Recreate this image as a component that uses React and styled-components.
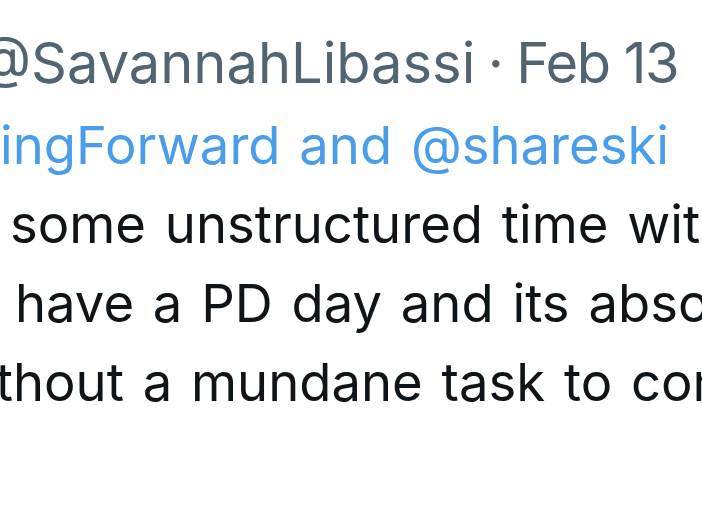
import React from "react";
import styled, { createGlobalStyle } from "styled-components";

const Global = createGlobalStyle`
  html, body { margin: 0; padding: 0; background: #fff; }
  body { font-family: Inter, "Noto Sans", sans-serif; }
`;

const Frame = styled.div`
  width: 702px;
  height: 526px;
  overflow: hidden;
  padding-top: 23px;
  box-sizing: border-box;
`;

const Header = styled.div`
  font-size: 56px;
  line-height: 80px;
  color: #536471;
  white-space: nowrap;
  margin: 0 0 3px ${p => p.$shift}px;
`;

const Sep = styled.span`
  display: inline-block;
  width: 41px;
  text-align: center;
`;

const Time = styled.span`
  letter-spacing: -1.5px;
`;

const Body = styled.div`
  font-size: 52.6px;
  line-height: 79px;
  word-spacing: 4px;
  white-space: nowrap;
`;

const Line = styled.div`
  margin-left: ${p => p.$shift}px;
  color: ${p => (p.$link ? "#4a9de9" : "#0f1419")};
`;

export default function App() {
  return (
    <Frame>
      <Global />
      <Header $shift={-23}>
        @SavannahLibassi<Sep>·</Sep><Time>Feb 13</Time>
      </Header>
      <Body>
        <Line $link $shift={0}>ingForward and @shareski</Line>
        <Line $shift={10}>some unstructured time with</Line>
        <Line $shift={15}>have a PD day and its absolutely</Line>
        <Line $shift={-60}>without a mundane task to complete</Line>
      </Body>
    </Frame>
  );
}
